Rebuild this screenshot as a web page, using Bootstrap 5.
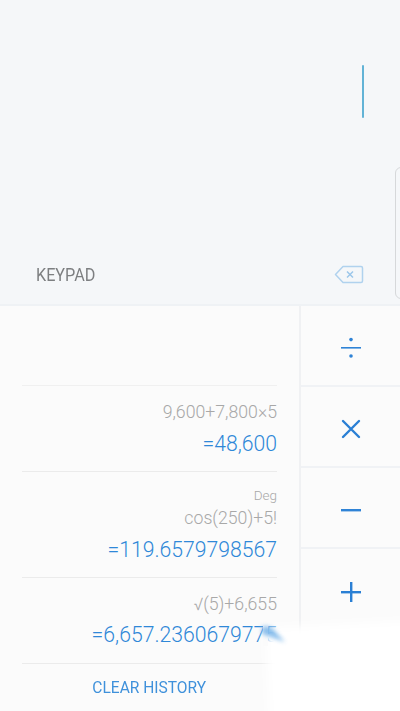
<!DOCTYPE html>
<html lang="en"><head><meta charset="utf-8"><title>Calculator</title>
<link rel="stylesheet" href="https://cdn.jsdelivr.net/npm/bootstrap@5.3.0/dist/css/bootstrap.min.css">
<style>
html,body{height:711px;overflow:hidden}
body{font-family:Roboto,"Liberation Sans",sans-serif;background:#fbfbfb}
.shell{width:400px;height:711px;position:relative;overflow:hidden}
.display{height:306px;background:#f5f7f9;border-bottom:2px solid #eff2f5;padding:65px 36px 0 36px}
.caret-bar{width:2px;height:53px;background:#62b3d6;border-radius:1px}
.keyrow{margin-top:139px;height:34px}
.keylabel{font-size:18.5px;color:#7d7f81;line-height:1;display:inline-block;transform:scaleX(.875);transform-origin:left center;padding-top:3px}
.handle{position:absolute;left:395px;top:167px;width:20px;height:132px;border:1px solid #d6d8da;border-radius:6px}
.lower{height:405px}
.history{width:301px;flex:none;border-right:2px solid #f0f1f3;padding:0 22px 0 22px}
.spacer{height:80px;border-bottom:1px solid #f0f0f0}
.entry{text-align:right;border-bottom:1px solid #ebebeb}
.e1{height:86px;padding-top:15px}
.e2{height:106px;padding-top:13px}
.e3{height:86px;padding-top:15px}
.deg{font-size:13.5px;font-weight:300;color:#a8a8a8;line-height:20px;padding-bottom:2px}
.expr{font-size:17.7px;font-weight:300;color:#a8a8a8;line-height:23px}
.res{font-size:21.2px;font-weight:300;color:#2f88d8;line-height:26px;margin-top:7px;white-space:nowrap}
.e3 .res{margin-top:6px}
.clear{height:47px;font-size:17px;color:#3f91db;font-weight:400;padding-top:1px}
.clear span{display:inline-block;transform:scaleX(.915)}
.ops{flex:1}
.op{height:81px;border-bottom:2px solid #f0f2f5;padding-top:4px}
.op:last-child{border-bottom:0}
.op svg{display:block}
.glowlayer{position:absolute;left:240px;top:600px;width:160px;height:111px;pointer-events:none}
</style></head>
<body>
<div class="shell">
  <div class="display">
    <div class="d-flex justify-content-end"><div class="caret-bar"></div></div>
    <div class="keyrow d-flex justify-content-between align-items-center">
      <span class="keylabel">KEYPAD</span>
      <svg width="30" height="19" viewBox="0 0 30 19" fill="none" stroke="#b0d2ee" stroke-width="1.5"><path d="M9 1.5H27a1.5 1.5 0 0 1 1.5 1.5V16a1.5 1.5 0 0 1-1.5 1.5H9L1.5 9.5Z" stroke-linejoin="round"/><path d="M13 6.5l6 6M19 6.5l-6 6" stroke="#9cc6ea"/></svg>
    </div>
  </div>
  <div class="handle"></div>
  <div class="lower d-flex">
    <div class="history">
      <div class="spacer"></div>
      <div class="entry e1"><div class="expr">9,600+7,800×5</div><div class="res">=48,600</div></div>
      <div class="entry e2"><div class="deg">Deg</div><div class="expr">cos(250)+5!</div><div class="res">=119.6579798567</div></div>
      <div class="entry e3"><div class="expr">√(5)+6,655</div><div class="res">=6,657.2360679775</div></div>
      <div class="clear d-flex align-items-center justify-content-center"><span>CLEAR HISTORY</span></div>
    </div>
    <div class="ops">
      <div class="op d-flex align-items-center justify-content-center"><svg width="22" height="24" viewBox="0 0 22 24" fill="#2f83d6"><rect x="1" y="11" width="20" height="1.6"/><circle cx="11" cy="3.6" r="1.8"/><circle cx="11" cy="20" r="1.8"/></svg></div>
      <div class="op d-flex align-items-center justify-content-center"><svg width="22" height="22" viewBox="0 0 22 22" stroke="#2a7fd4" stroke-width="2.4" stroke-linecap="round"><path d="M3 3l16 16M19 3L3 19"/></svg></div>
      <div class="op d-flex align-items-center justify-content-center"><svg width="22" height="4" viewBox="0 0 22 4" fill="#2f83d6"><rect x="1" y="1" width="20" height="2.4"/></svg></div>
      <div class="op d-flex align-items-center justify-content-center"><svg width="22" height="22" viewBox="0 0 22 22" fill="#2a7fd4"><rect x="1" y="10" width="20" height="2.4"/><rect x="10" y="1" width="2.4" height="20"/></svg></div>
    </div>
  </div>
  <svg class="glowlayer" width="160" height="111" viewBox="240 600 160 111">
    <defs>
      <filter id="softA" x="-20%" y="-20%" width="140%" height="140%"><feGaussianBlur stdDeviation="4"/></filter>
      <filter id="softB" x="-30%" y="-30%" width="160%" height="160%"><feGaussianBlur stdDeviation="2"/></filter>
    </defs>
    <polygon points="265,628 300,626 420,620 420,730 270,730" fill="#fff" filter="url(#softA)"/>
    <rect x="263" y="624" width="5" height="22" fill="#fbfbfb"/>
    <polygon points="262,626 271,627 285,642 262,634" fill="#6fb0e8" opacity=".8" filter="url(#softB)"/>
  </svg>
</div>
<script src="https://cdn.jsdelivr.net/npm/bootstrap@5.3.0/dist/js/bootstrap.bundle.min.js"></script>
</body></html>
